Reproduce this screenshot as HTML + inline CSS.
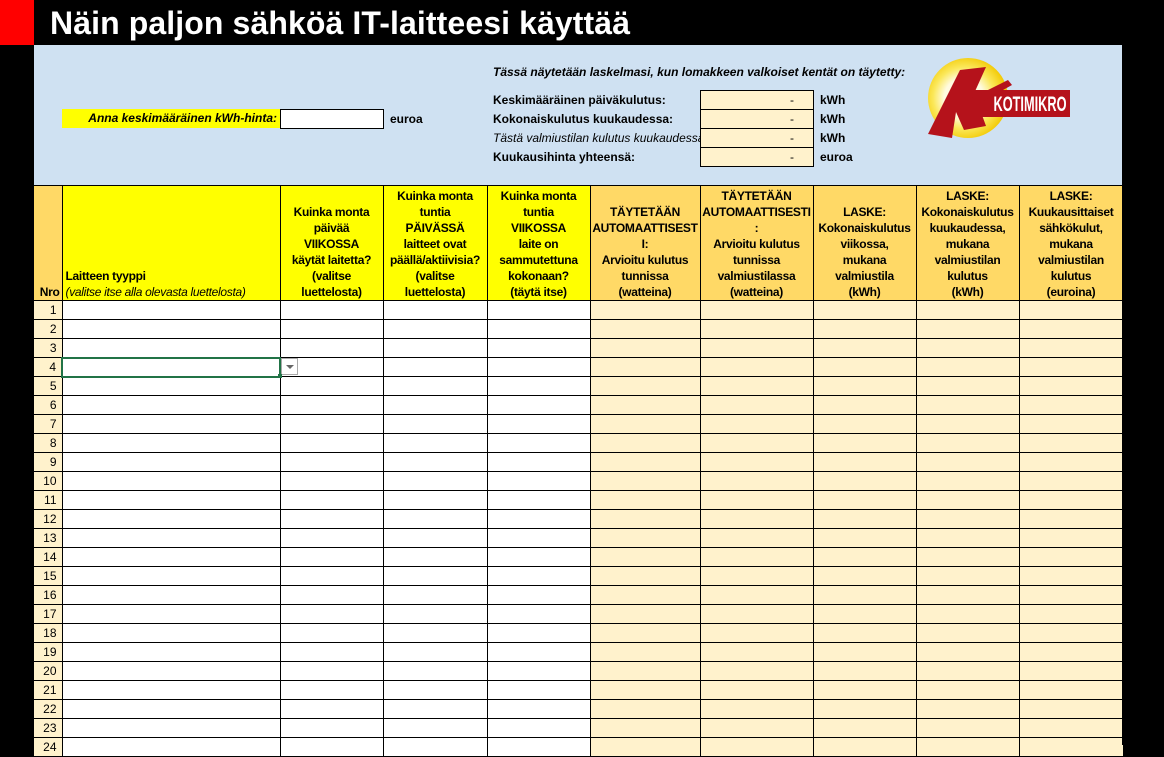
<!DOCTYPE html>
<html><head><meta charset="utf-8"><style>
*{margin:0;padding:0;box-sizing:border-box}
body{width:1164px;height:745px;background:#000;position:relative;overflow:hidden;font-family:"Liberation Sans",Arial,sans-serif;color:#000}
.red{position:absolute;left:0;top:0;width:34px;height:45px;background:#f00}
.title{position:absolute;left:50px;top:4px;color:#fff;font-weight:bold;font-size:32px;line-height:38px;white-space:nowrap;letter-spacing:0.1px}
.panel{position:absolute;left:34px;top:45px;width:1088px;height:140px;background:#cfe1f2}
.ab{position:absolute;font-size:12px;white-space:nowrap;line-height:19px}
.b{font-weight:bold}
.i{font-style:italic}
.box{position:absolute;left:700px;width:114px;height:20px;background:#fff2cc;border:1px solid #000;text-align:right;padding-right:19px;font-size:12px;line-height:18px}
table{position:absolute;left:34px;top:185px;border-collapse:collapse;table-layout:fixed;width:1089px}
tr{height:19px}
tr.h{height:115px}
td{border:1px solid #000;font-size:12px;padding:0;overflow:hidden;background:#fff;line-height:15px}
tr.h td{font-weight:bold;text-align:center;vertical-align:bottom;line-height:16px;letter-spacing:-0.3px;padding-bottom:0}
td.n{background:#fff2cc;text-align:right;padding-right:5px;border-left:none}
tr.h td.n{background:#ffd966;padding-right:2px;text-align:right}
td.y{background:#ffff00}
td.o{background:#fff2cc}
tr.h td.o{background:#ffd966}
</style></head><body>
<div class="red"></div>
<div class="title">Näin paljon sähköä IT-laitteesi käyttää</div>
<div class="panel"></div>
<div class="ab b i" style="left:62px;top:109px;width:218px;height:19px;background:#ff0;text-align:right;padding-right:3px">Anna keskimääräinen kWh-hinta:</div>
<div style="position:absolute;left:280px;top:109px;width:104px;height:20px;background:#fff;border:1px solid #000"></div>
<div class="ab b" style="left:390px;top:110px">euroa</div>
<div class="ab b i" style="left:493px;top:63px">Tässä näytetään laskelmasi, kun lomakkeen valkoiset kentät on täytetty:</div>
<div class="ab b" style="left:493px;top:91px">Keskimääräinen päiväkulutus:</div>
<div class="ab b" style="left:493px;top:110px">Kokonaiskulutus kuukaudessa:</div>
<div class="ab i" style="left:493px;top:129px;width:207px;overflow:hidden">Tästä valmiustilan kulutus kuukaudessa</div>
<div class="ab b" style="left:493px;top:148px">Kuukausihinta yhteensä:</div>
<div class="box" style="top:90px">-</div>
<div class="box" style="top:109px">-</div>
<div class="box" style="top:128px">-</div>
<div class="box" style="top:147px">-</div>
<div class="ab b" style="left:820px;top:91px">kWh</div>
<div class="ab b" style="left:820px;top:110px">kWh</div>
<div class="ab b" style="left:820px;top:129px">kWh</div>
<div class="ab b" style="left:820px;top:148px">euroa</div>
<svg style="position:absolute;left:920px;top:52px" width="160" height="92" viewBox="0 0 160 92">
<defs><radialGradient id="g" cx="0.45" cy="0.5" r="0.55"><stop offset="0.45" stop-color="#fffbe0"/><stop offset="0.7" stop-color="#fbe85a"/><stop offset="1" stop-color="#f2c800"/></radialGradient></defs>
<circle cx="48" cy="46" r="40" fill="url(#g)"/>
<rect x="46" y="38" width="104" height="27" fill="#b5121b"/>
<path d="M40 18 L66 15 L52 46 L88 28 L92 33 L58 52 L66 74 L44 78 L36 60 L32 86 L8 82 Z" fill="#b5121b"/>
<text x="110" y="59" fill="#fff" font-family="Liberation Sans" font-weight="bold" font-size="21" text-anchor="middle" textLength="73" lengthAdjust="spacingAndGlyphs">KOTIMIKRO</text>
</svg>
<table>
<colgroup><col style="width:28px"><col style="width:218px"><col style="width:103px"><col style="width:104px"><col style="width:103px"><col style="width:110px"><col style="width:113px"><col style="width:103px"><col style="width:103px"><col style="width:104px"></colgroup>
<tr class="h"><td class="n">Nro</td><td class="y" style="text-align:left;padding-left:3px">Laitteen tyyppi<br><span style="font-weight:normal;font-style:italic">(valitse itse alla olevasta luettelosta)</span></td>
<td class="y">Kuinka monta<br>päivää<br>VIIKOSSA<br>käytät laitetta?<br>(valitse<br>luettelosta)</td>
<td class="y">Kuinka monta<br>tuntia<br>PÄIVÄSSÄ<br>laitteet ovat<br>päällä/aktiivisia?<br>(valitse<br>luettelosta)</td>
<td class="y">Kuinka monta<br>tuntia<br>VIIKOSSA<br>laite on<br>sammutettuna<br>kokonaan?<br>(täytä itse)</td>
<td class="o">TÄYTETÄÄN<br>AUTOMAATTISEST<br>I:<br>Arvioitu kulutus<br>tunnissa<br>(watteina)</td>
<td class="o">TÄYTETÄÄN<br>AUTOMAATTISESTI<br>:<br>Arvioitu kulutus<br>tunnissa<br>valmiustilassa<br>(watteina)</td>
<td class="o">LASKE:<br>Kokonaiskulutus<br>viikossa,<br>mukana<br>valmiustila<br>(kWh)</td>
<td class="o">LASKE:<br>Kokonaiskulutus<br>kuukaudessa,<br>mukana<br>valmiustilan<br>kulutus<br>(kWh)</td>
<td class="o">LASKE:<br>Kuukausittaiset<br>sähkökulut,<br>mukana<br>valmiustilan<br>kulutus<br>(euroina)</td></tr>
<tr><td class="n">1</td><td></td><td></td><td></td><td></td><td class="o"></td><td class="o"></td><td class="o"></td><td class="o"></td><td class="o"></td></tr>
<tr><td class="n">2</td><td></td><td></td><td></td><td></td><td class="o"></td><td class="o"></td><td class="o"></td><td class="o"></td><td class="o"></td></tr>
<tr><td class="n">3</td><td></td><td></td><td></td><td></td><td class="o"></td><td class="o"></td><td class="o"></td><td class="o"></td><td class="o"></td></tr>
<tr><td class="n">4</td><td style="border:2px solid #217346"></td><td></td><td></td><td></td><td class="o"></td><td class="o"></td><td class="o"></td><td class="o"></td><td class="o"></td></tr>
<tr><td class="n">5</td><td></td><td></td><td></td><td></td><td class="o"></td><td class="o"></td><td class="o"></td><td class="o"></td><td class="o"></td></tr>
<tr><td class="n">6</td><td></td><td></td><td></td><td></td><td class="o"></td><td class="o"></td><td class="o"></td><td class="o"></td><td class="o"></td></tr>
<tr><td class="n">7</td><td></td><td></td><td></td><td></td><td class="o"></td><td class="o"></td><td class="o"></td><td class="o"></td><td class="o"></td></tr>
<tr><td class="n">8</td><td></td><td></td><td></td><td></td><td class="o"></td><td class="o"></td><td class="o"></td><td class="o"></td><td class="o"></td></tr>
<tr><td class="n">9</td><td></td><td></td><td></td><td></td><td class="o"></td><td class="o"></td><td class="o"></td><td class="o"></td><td class="o"></td></tr>
<tr><td class="n">10</td><td></td><td></td><td></td><td></td><td class="o"></td><td class="o"></td><td class="o"></td><td class="o"></td><td class="o"></td></tr>
<tr><td class="n">11</td><td></td><td></td><td></td><td></td><td class="o"></td><td class="o"></td><td class="o"></td><td class="o"></td><td class="o"></td></tr>
<tr><td class="n">12</td><td></td><td></td><td></td><td></td><td class="o"></td><td class="o"></td><td class="o"></td><td class="o"></td><td class="o"></td></tr>
<tr><td class="n">13</td><td></td><td></td><td></td><td></td><td class="o"></td><td class="o"></td><td class="o"></td><td class="o"></td><td class="o"></td></tr>
<tr><td class="n">14</td><td></td><td></td><td></td><td></td><td class="o"></td><td class="o"></td><td class="o"></td><td class="o"></td><td class="o"></td></tr>
<tr><td class="n">15</td><td></td><td></td><td></td><td></td><td class="o"></td><td class="o"></td><td class="o"></td><td class="o"></td><td class="o"></td></tr>
<tr><td class="n">16</td><td></td><td></td><td></td><td></td><td class="o"></td><td class="o"></td><td class="o"></td><td class="o"></td><td class="o"></td></tr>
<tr><td class="n">17</td><td></td><td></td><td></td><td></td><td class="o"></td><td class="o"></td><td class="o"></td><td class="o"></td><td class="o"></td></tr>
<tr><td class="n">18</td><td></td><td></td><td></td><td></td><td class="o"></td><td class="o"></td><td class="o"></td><td class="o"></td><td class="o"></td></tr>
<tr><td class="n">19</td><td></td><td></td><td></td><td></td><td class="o"></td><td class="o"></td><td class="o"></td><td class="o"></td><td class="o"></td></tr>
<tr><td class="n">20</td><td></td><td></td><td></td><td></td><td class="o"></td><td class="o"></td><td class="o"></td><td class="o"></td><td class="o"></td></tr>
<tr><td class="n">21</td><td></td><td></td><td></td><td></td><td class="o"></td><td class="o"></td><td class="o"></td><td class="o"></td><td class="o"></td></tr>
<tr><td class="n">22</td><td></td><td></td><td></td><td></td><td class="o"></td><td class="o"></td><td class="o"></td><td class="o"></td><td class="o"></td></tr>
<tr><td class="n">23</td><td></td><td></td><td></td><td></td><td class="o"></td><td class="o"></td><td class="o"></td><td class="o"></td><td class="o"></td></tr>
<tr><td class="n">24</td><td></td><td></td><td></td><td></td><td class="o"></td><td class="o"></td><td class="o"></td><td class="o"></td><td class="o"></td></tr>
</table>
<div style="position:absolute;left:281px;top:358px;width:17px;height:17px;background:#fff;border:1px solid #aaa"><div style="position:absolute;left:4px;top:6px;width:0;height:0;border-left:4px solid transparent;border-right:4px solid transparent;border-top:4px solid #666"></div></div>
<div style="position:absolute;left:278px;top:374px;width:4px;height:4px;background:#217346"></div>
<div style="position:absolute;left:1122px;top:45px;width:42px;height:700px;background:#000"></div>
</body></html>
